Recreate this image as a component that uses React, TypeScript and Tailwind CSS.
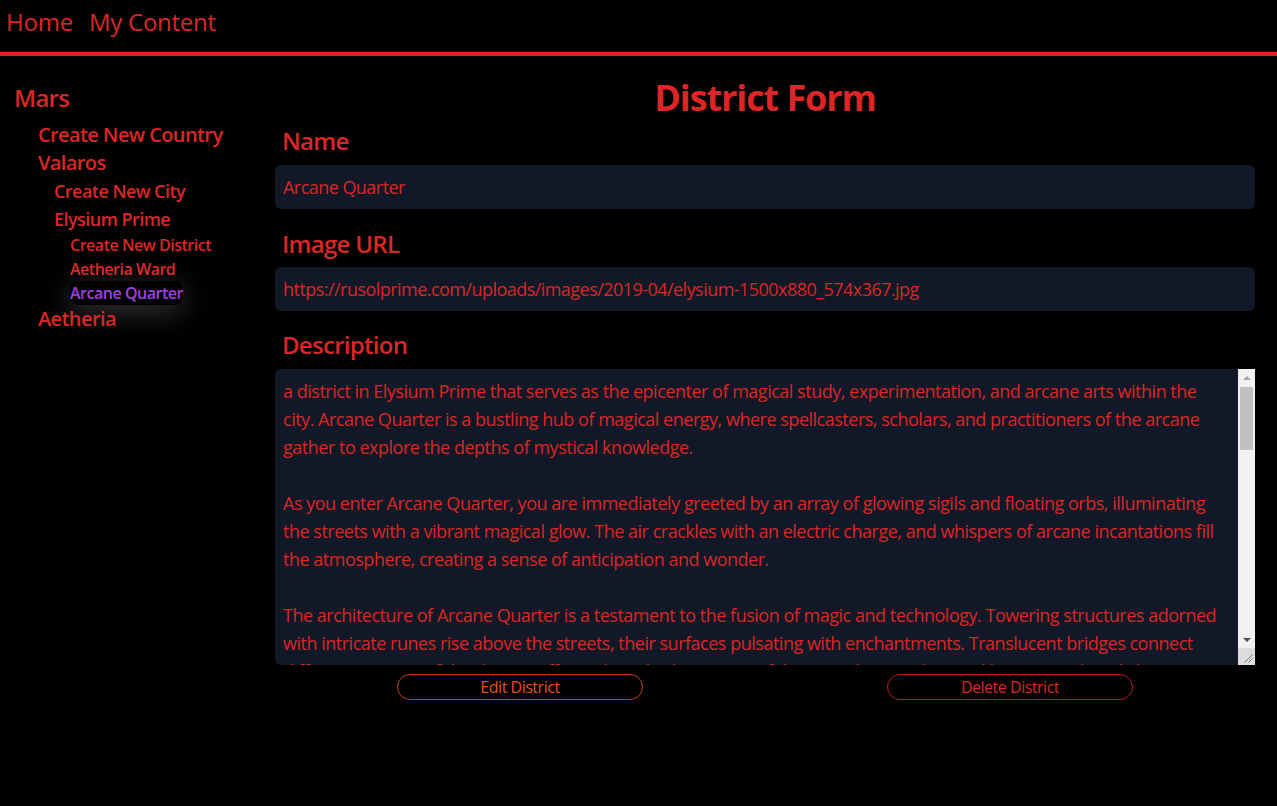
import React from 'react';

const description = [
  'a district in Elysium Prime that serves as the epicenter of magical study, experimentation, and arcane arts within the',
  'city. Arcane Quarter is a bustling hub of magical energy, where spellcasters, scholars, and practitioners of the arcane',
  'gather to explore the depths of mystical knowledge.',
  '',
  'As you enter Arcane Quarter, you are immediately greeted by an array of glowing sigils and floating orbs, illuminating',
  'the streets with a vibrant magical glow. The air crackles with an electric charge, and whispers of arcane incantations fill',
  'the atmosphere, creating a sense of anticipation and wonder.',
  '',
  'The architecture of Arcane Quarter is a testament to the fusion of magic and technology. Towering structures adorned',
  'with intricate runes rise above the streets, their surfaces pulsating with enchantments. Translucent bridges connect',
  'different sections of the district, offering breathtaking views of the sprawling academies, libraries, and workshops',
  'that line the avenues below.',
  '',
  'At the heart of the district lies the Grand Arcanum, a vast academy where aspiring mages hone their craft under the',
  'guidance of renowned masters. Its halls are filled with ancient tomes, enchanted artifacts, and laboratories where',
  'daring experiments push the boundaries of what magic can achieve.',
  '',
  'Market stalls along the winding alleys offer rare reagents, spell components, and curiosities gathered from every',
  'corner of Mars. Merchants haggle over shimmering crystals and vials of liquid starlight, while street performers',
  'dazzle onlookers with illusions that dance through the air.',
  '',
  'The Arcane Council, a body of the most accomplished sorcerers in Elysium Prime, convenes in the Spire of Echoes to',
  'oversee the study of magic and ensure that its power is wielded responsibly. Their decrees shape the future of the',
  'district and the safety of the entire city.',
  '',
  'As night falls, Arcane Quarter transforms into a spectacle of light. Lanterns powered by captured moonlight flicker',
  'to life, and the sky above is painted with auroras conjured by students practicing their evening lessons.',
  '',
  'For those who seek knowledge, power, or simply a glimpse of the extraordinary, Arcane Quarter stands as a beacon of',
  'wonder, a place where the boundaries between the possible and the impossible blur with every passing day.',
].join('\n');

const sideItem = 'font-semibold tracking-[-0.03em]';

function Sidebar() {
  return (
    <aside className="w-[260px] shrink-0 pl-[14px] pt-[26px]">
      <div className={`text-2xl leading-8 ${sideItem}`}>Mars</div>
      <ul className="mt-[7px] pl-6">
        <li className={`text-xl leading-7 ${sideItem}`}>Create New Country</li>
        <li className={`text-xl leading-7 ${sideItem}`}>Valaros</li>
        <li>
          <ul className="pl-4">
            <li className={`text-lg leading-7 ${sideItem}`}>Create New City</li>
            <li className={`text-lg leading-7 ${sideItem}`}>Elysium Prime</li>
            <li>
              <ul className="pl-4">
                <li className={`text-base leading-6 ${sideItem}`}>Create New District</li>
                <li className={`text-base leading-6 ${sideItem}`}>Aetheria Ward</li>
                <li className={`text-base leading-6 ${sideItem}`}>
                  <span className="inline-block rounded-lg text-[#a23ee0] shadow-[0_6px_28px_rgba(255,255,255,0.22)]">
                    Arcane Quarter
                  </span>
                </li>
              </ul>
            </li>
          </ul>
        </li>
        <li className={`text-xl leading-7 ${sideItem}`}>Aetheria</li>
      </ul>
    </aside>
  );
}

function Field({ label, value, className }: { label: string; value: string; className: string }) {
  return (
    <>
      <label className={`${className} pl-[7px] text-2xl font-semibold leading-8 tracking-[-0.03em]`}>{label}</label>
      <input
        readOnly
        value={value}
        className="h-11 rounded-md bg-[#111827] px-2 text-lg leading-7 tracking-[-0.03em] text-[#dc2626] outline-none"
      />
    </>
  );
}

// the browser hides native scrollbars, so the textarea's bar is drawn over it
function FakeScrollbar() {
  return (
    <div className="pointer-events-none absolute inset-y-0 right-0 flex w-[17px] flex-col bg-[#f1f1f1]">
      <div className="flex h-[17px] items-center justify-center">
        <span className="h-0 w-0 border-x-[4px] border-b-[4px] border-x-transparent border-b-[#a3a3a3]" />
      </div>
      <div className="flex-1 px-[2px] pt-px">
        <div className="h-[63px] bg-[#c1c1c1]" />
      </div>
      <div className="flex h-[17px] items-center justify-center">
        <span className="h-0 w-0 border-x-[4px] border-t-[4px] border-x-transparent border-t-[#505050]" />
      </div>
      <div className="flex h-[17px] items-end justify-end bg-[#dcdcdc] p-[2px]">
        <svg width="10" height="10" viewBox="0 0 10 10" stroke="#7a7a7a" strokeWidth="1">
          <path d="M9.5 1.5 1.5 9.5M9.5 5.5 5.5 9.5" />
        </svg>
      </div>
    </div>
  );
}

export default function App() {
  return (
    <div className="min-h-[806px] bg-black text-[#dc2626]" style={{ fontFamily: '"Open Sans", "Noto Sans", sans-serif' }}>
      <header className="h-14 border-b-4 border-[#dc2626]">
        <nav className="flex gap-4 px-[6px] pt-[6px] text-2xl font-medium leading-8 tracking-[-0.01em]">
          <a href="#">Home</a>
          <a href="#">My Content</a>
        </nav>
      </header>
      <div className="flex">
        <Sidebar />
        <main className="flex-1 pl-[15px] pr-[22px] pt-[22px]">
          <h1 className="text-center text-4xl font-bold leading-10 tracking-[-0.03em]">District Form</h1>
          <form className="flex flex-col">
            <Field label="Name" value="Arcane Quarter" className="mt-[7px] mb-2" />
            <Field
              label="Image URL"
              value="https://rusolprime.com/uploads/images/2019-04/elysium-1500x880_574x367.jpg"
              className="mt-[19px] mb-[7px]"
            />
            <label className="mt-[18px] mb-2 pl-[7px] text-2xl font-semibold leading-8 tracking-[-0.03em]">Description</label>
            <div className="relative overflow-hidden rounded-l-md">
              <textarea
                readOnly
                wrap="off"
                value={description}
                className="block h-[296px] w-full resize-none overflow-hidden whitespace-pre bg-[#111827] py-2 pl-2 pr-[25px] text-lg leading-7 tracking-[-0.027em] text-[#dc2626] outline-none"
              />
              <FakeScrollbar />
            </div>
            <div className="mt-[9px] grid grid-cols-2">
              <div className="flex justify-center">
                <button type="button" className="h-[26px] w-[246px] rounded-full border border-[#c2410c] text-base leading-6 tracking-[-0.03em] text-[#e4501c]">
                  Edit District
                </button>
              </div>
              <div className="flex justify-center">
                <button type="button" className="h-[26px] w-[246px] rounded-full border border-[#b91c1c] text-base leading-6 tracking-[-0.03em] text-[#dc2626]">
                  Delete District
                </button>
              </div>
            </div>
          </form>
        </main>
      </div>
    </div>
  );
}
